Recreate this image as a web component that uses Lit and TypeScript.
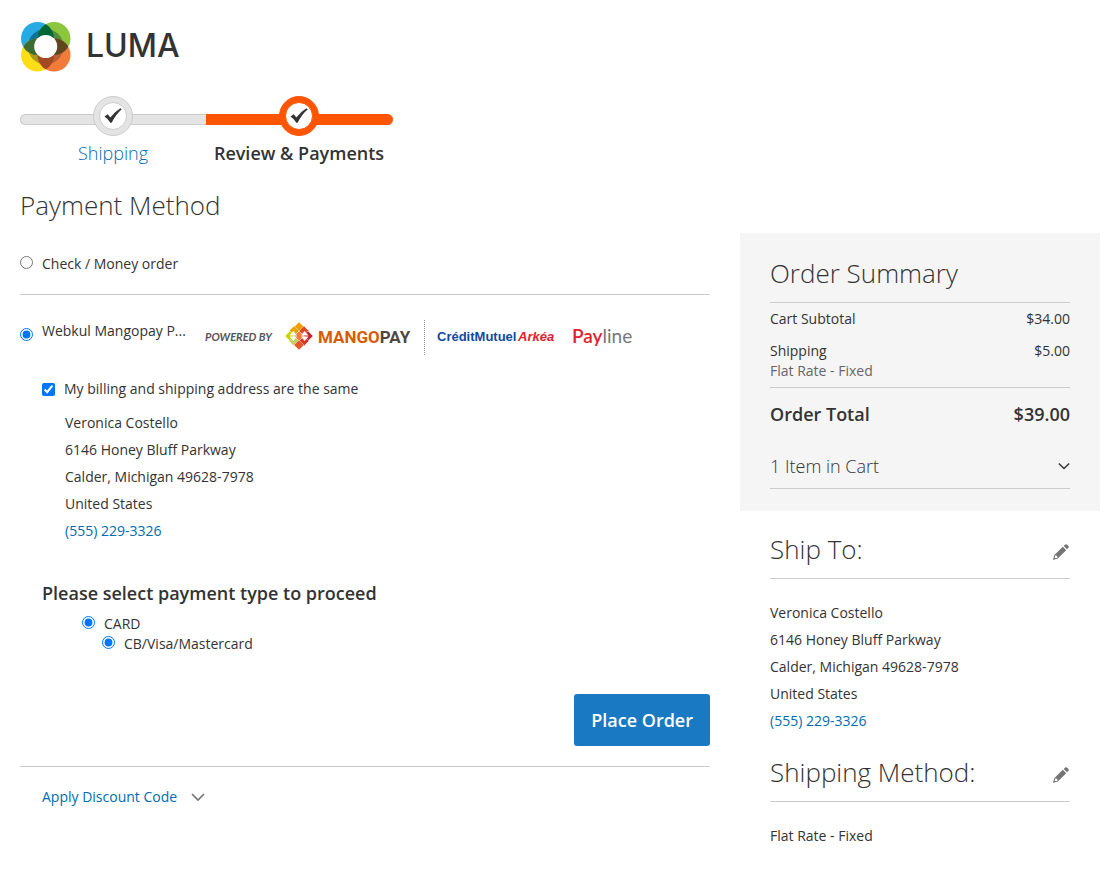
import { LitElement, html, svg, css, TemplateResult } from "lit";
import { customElement, state } from "lit/decorators.js";

const ADDRESS = ["Veronica Costello", "6146 Honey Bluff Parkway", "Calder, Michigan 49628-7978", "United States"];
const PHONE = "(555) 229-3326";

const chevron = (width: number) => html`
  <svg class="chevron" width=${width} height="12" viewBox="0 0 14 12" fill="none" stroke="currentColor" stroke-width="1.7" aria-hidden="true">
    <path d="M1 3 7 9 13 3" />
  </svg>`;

const pencil = html`
  <svg width="17" height="16" viewBox="0 0 17 16" aria-hidden="true">
    <path fill="#757575" fill-rule="evenodd" d="M0 16 1.200 11.200 9.800 2.800 13.200 6.200 4.800 14.600ZM2.200 11.600 3.400 11.600 4.500 12.800 4.400 13.800 2.300 14.300 1.700 13.600Z" />
    <path fill="#757575" d="M10.700 2 12.200.6Q13.200-.2 14.200.7L15.400 1.900Q16.200 2.900 15.400 3.800L14 5.300Z" />
  </svg>`;

const check = html`
  <svg width="18" height="16" viewBox="0 0 18 16" aria-hidden="true">
    <path fill="#333" d="M.5 8.400 3.700 6.300Q5 7.500 6.300 9.400 10.500 4 16.400.3L17.800 1.300Q11.500 6.700 7.800 14.600L6.600 15.100Q4.500 11 .5 8.400Z" />
  </svg>`;

/* Lozenges of the Mangopay emblem: centre x, centre y, colour. */
const LOZENGES: [number, number, string][] = [
  [14, 5, "#f59c00"], [9, 9, "#e8a400"], [19, 9, "#dd4b22"],
  [5, 14, "#c8d400"], [14, 14, "#f07d3a"], [23, 14, "#cc2229"],
  [9, 19, "#c3cf55"], [19, 19, "#d43a2a"], [14, 23, "#e4572e"],
];

@customElement("app-root")
export class AppRoot extends LitElement {
  static styles = css`
    :host { display: block; color: #333; font: 14px/20px "Open Sans", "Noto Sans", sans-serif; }
    * { box-sizing: border-box; }
    .page { padding: 20px; }
    h1, h2, ol { margin: 0; padding: 0; }
    a { color: #006bb4; text-decoration: none; }
    button { font-family: inherit; cursor: pointer; }
    input { width: 13px; height: 13px; margin: 0; flex: none; }
    input[type="radio"] { margin-bottom: 3px; }
    svg { display: block; flex: none; }

    .logo { display: block; width: 170px; }
    .wordmark { font: 500 32px Inter, sans-serif; }

    .progress { display: flex; list-style: none; margin-top: 23px; }
    .step { display: flex; flex-direction: column; align-items: center; width: 186px; font-size: 18px; line-height: 24px; }
    .track { display: grid; place-items: center; width: 100%; height: 40px; }
    .track::before { content: ""; grid-area: 1 / 1; width: 100%; height: 9px; margin-top: 6px; background: #e4e4e4; border: 1px solid #ccc; border-right: 0; border-radius: 6px 0 0 6px; }
    .badge { grid-area: 1 / 1; z-index: 1; display: grid; place-items: center; width: 40px; height: 40px; border-radius: 50%; background: #e4e4e4; border: 1px solid #ccc; }
    .hole { display: grid; place-items: center; width: 28px; height: 28px; border-radius: 50%; background: #fff; border: 1px solid #ccc; }
    .current .track::before { background: #ff5501; border-color: #ff5501; border-radius: 0 6px 6px 0; }
    .current .badge { background: #ff5501; }
    .current .badge, .current .hole { border-color: #ff5501; }
    .step-name { margin-top: 5px; }
    a.step-name { font-weight: 300; }
    .current .step-name { font-weight: 600; white-space: nowrap; }

    .columns { display: grid; grid-template-columns: minmax(0, 1fr) 360px; gap: 30px; margin-top: 22px; }
    .title { font-size: 26px; line-height: 36px; font-weight: 300; }
    .method { display: flex; align-items: center; border-bottom: 1px solid #ccc; gap: 9px; padding: 31px 0 20px; }
    .payment { padding-bottom: 20px; border-bottom: 1px solid #ccc; }
    .chosen { display: flex; align-items: flex-start; gap: 9px; padding-top: 23px; }
    .chosen input { margin-top: 10px; }
    .chosen label { display: flex; align-items: flex-start; gap: 19px; min-width: 0; }
    .chosen-name { margin-top: 3px; white-space: nowrap; }
    .powered { font: italic 700 11px Lato, sans-serif; }
    .mangopay { font: 700 17px Roboto, sans-serif; }
    .mutuel { font: 700 13px "Liberation Sans", sans-serif; }
    .arkea { font: italic 700 13px "Liberation Sans", sans-serif; }
    .payline { font: 600 19px Lato, sans-serif; }
    .line { font-weight: 400; }
    .content { padding-left: 22px; }
    .same { display: flex; align-items: center; gap: 9px; margin-top: 21px; }
    .address { font-style: normal; line-height: 27px; }
    .content .address { padding: 10px 0 0 23px; }
    .types { margin-top: 37px; font-size: 18px; line-height: 24px; font-weight: 600; }
    .type { display: flex; align-items: center; gap: 9px; padding-left: 40px; }
    .type.first { margin-top: 9px; }
    .type.nested { padding-left: 60px; }
    .actions { display: flex; justify-content: flex-end; margin-top: 40px; }
    .order { height: 52px; padding: 0 17px; border: 0; border-radius: 3px; background: #1979c3; color: #fff; font-size: 18px; line-height: 24px; font-weight: 600; }
    .discount { display: flex; align-items: center; gap: 14px; margin: 20px 0 0 22px; padding: 0; border: 0; background: none; color: #006bb4; font-size: 14px; line-height: 20px; }
    .discount svg { color: #757575; }

    .sidebar { margin-top: 46px; }
    .summary { padding: 22px 30px; background: #f5f5f5; }
    .summary .title { padding-bottom: 11px; border-bottom: 1px solid #ccc; }
    .row { display: flex; justify-content: space-between; }
    .totals { padding: 6px 0; border-bottom: 1px solid #ccc; }
    .totals .row + .row { margin-top: 12px; }
    .note { color: #666; }
    .total { padding: 14px 0 16px; font-size: 18px; line-height: 24px; font-weight: 600; }
    .cart { display: flex; align-items: center; justify-content: space-between; width: 100%; padding: 12px 0 10px; border: 0; border-bottom: 1px solid #ccc; background: none; color: #333; font-size: 18px; line-height: 24px; font-weight: 300; }
    .block { padding: 0 30px; }
    .block-head { display: flex; align-items: center; justify-content: space-between; padding-bottom: 11px; border-bottom: 1px solid #ccc; }
    .block:first-of-type { margin-top: 20px; }
    .block .address { padding: 20px 0; }
    .edit { padding: 5px 0 0; border: 0; background: none; }
  `;

  @state() private method = "mangopay";

  private logo(): TemplateResult {
    return html`
      <svg width="170" height="53" viewBox="0 0 170 53" role="img" aria-label="LUMA">
        <defs>
          <clipPath id="tl"><circle cx="17.500" cy="18.500" r="16.500" /></clipPath>
          <clipPath id="tr"><circle cx="34" cy="18.500" r="16.500" /></clipPath>
          <clipPath id="bl"><circle cx="17.500" cy="35" r="16.500" /></clipPath>
          <clipPath id="br"><circle cx="34" cy="35" r="16.500" /></clipPath>
        </defs>
        <circle cx="17.500" cy="18.500" r="16.500" fill="#27a9e1" />
        <circle cx="34" cy="18.500" r="16.500" fill="#8cc63f" />
        <circle cx="17.500" cy="35" r="16.500" fill="#ffde17" />
        <circle cx="34" cy="35" r="16.500" fill="#f37b3a" />
        <g clip-path="url(#tl)"><circle cx="25.700" cy="26.700" r="17.800" fill="#0b72a0" /></g>
        <g clip-path="url(#tr)"><circle cx="25.700" cy="26.700" r="17.800" fill="#548a3a" /></g>
        <g clip-path="url(#bl)"><circle cx="25.700" cy="26.700" r="17.800" fill="#a89a1c" /></g>
        <g clip-path="url(#br)"><circle cx="25.700" cy="26.700" r="17.800" fill="#ba6032" /></g>
        <g clip-path="url(#tl)"><circle cx="34" cy="18.500" r="16.500" fill="#006837" /></g>
        <g clip-path="url(#tl)"><circle cx="17.500" cy="35" r="16.500" fill="#3e6b32" /></g>
        <g clip-path="url(#tr)"><circle cx="34" cy="35" r="16.500" fill="#60461f" /></g>
        <g clip-path="url(#bl)"><circle cx="34" cy="35" r="16.500" fill="#a34a24" /></g>
        <circle cx="25.700" cy="26.500" r="11.500" fill="#fff" />
        <text x="66" y="37" class="wordmark" fill="#333">LUMA</text>
      </svg>`;
  }

  private brands(): TemplateResult {
    return html`
      <svg width="430" height="40" viewBox="0 0 430 40" role="img" aria-label="Powered by Mangopay, Crédit Mutuel Arkéa, Payline">
        <text x="0" y="23" fill="#555" class="powered">POWERED BY</text>
        <g transform="translate(80 4)">
          ${LOZENGES.map(([x, y, c]) => svg`<path fill=${c} stroke="#fff" stroke-width=".4" d="M${x} ${y - 5}L${x + 5} ${y}L${x} ${y + 5}L${x - 5} ${y}Z" />`)}
          <path fill="#fff" d="M4.500 13.500 8.500 9 12 13.500ZM16 13.500 19.500 9 23.500 13.500ZM4.500 14.500 8.500 19 12 14.500ZM16 14.500 19.500 19 23.500 14.500Z" />
        </g>
        <text x="113" y="25" class="mangopay" fill="#d95b00">MANGO<tspan fill="#51463f">PAY</tspan></text>
        <path stroke="#999" stroke-dasharray="1 1" d="M219.500 2V38" />
        <text x="232" y="23" class="mutuel" fill="#104a9e">CréditMutuel</text>
        <text x="313" y="23" class="arkea" fill="#e2202c">Arkéa</text>
        <text x="367" y="25" class="payline" fill="#e2202c">Pay<tspan class="line" fill="#777">line</tspan></text>
      </svg>`;
  }

  private address(): TemplateResult {
    return html`<address class="address">
      ${ADDRESS.map((line) => html`<div>${line}</div>`)}
      <a href="tel:5552293326">${PHONE}</a>
    </address>`;
  }

  render() {
    return html`
      <div class="page">
        <header><a class="logo" href="#">${this.logo()}</a></header>
        <ol class="progress">
          <li class="step"><div class="track"><span class="badge"><span class="hole">${check}</span></span></div><a class="step-name" href="#shipping">Shipping</a></li>
          <li class="step current"><div class="track"><span class="badge"><span class="hole">${check}</span></span></div><span class="step-name">Review &amp; Payments</span></li>
        </ol>
        <div class="columns">
          <main>
            <h1 class="title">Payment Method</h1>
            <div class="method">
              <input id="check" type="radio" name="method" .checked=${this.method === "check"} @change=${() => (this.method = "check")} />
              <label for="check">Check / Money order</label>
            </div>
            <section class="payment">
              <div class="chosen">
                <input id="mangopay" type="radio" name="method" .checked=${this.method === "mangopay"} @change=${() => (this.method = "mangopay")} />
                <label for="mangopay"><span class="chosen-name">Webkul Mangopay P...</span>${this.brands()}</label>
              </div>
              <div class="content">
                <div class="same"><input id="same" type="checkbox" checked /><label for="same">My billing and shipping address are the same</label></div>
                ${this.address()}
                <h2 class="types">Please select payment type to proceed</h2>
                <div class="type first"><input id="card" type="radio" name="type" checked /><label for="card">CARD</label></div>
                <div class="type nested"><input id="cb" type="radio" name="card-type" checked /><label for="cb">CB/Visa/Mastercard</label></div>
              </div>
              <div class="actions"><button class="order" type="button">Place Order</button></div>
            </section>
            <button class="discount" type="button">Apply Discount Code ${chevron(14)}</button>
          </main>
          <aside class="sidebar">
            <div class="summary">
              <h2 class="title">Order Summary</h2>
              <div class="totals">
                <div class="row"><span>Cart Subtotal</span><span>$34.00</span></div>
                <div class="row"><span>Shipping</span><span>$5.00</span></div>
                <div class="note">Flat Rate - Fixed</div>
              </div>
              <div class="row total"><span>Order Total</span><span>$39.00</span></div>
              <button class="cart" type="button"><span>1 Item in Cart</span>${chevron(12)}</button>
            </div>
            <section class="block">
              <div class="block-head"><h2 class="title">Ship To:</h2><button class="edit" type="button" aria-label="Edit address">${pencil}</button></div>
              ${this.address()}
            </section>
            <section class="block">
              <div class="block-head"><h2 class="title">Shipping Method:</h2><button class="edit" type="button" aria-label="Edit shipping method">${pencil}</button></div>
              <div class="address">Flat Rate - Fixed</div>
            </section>
          </aside>
        </div>
      </div>`;
  }
}
